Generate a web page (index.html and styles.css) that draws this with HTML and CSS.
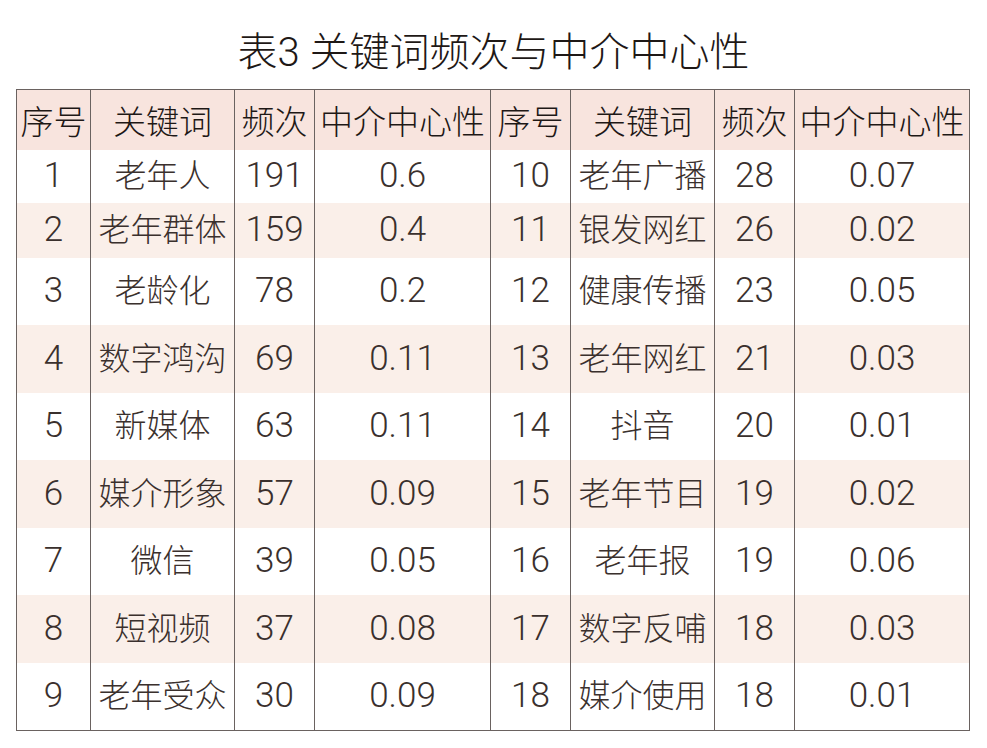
FILE: index.html
```html
<!DOCTYPE html>
<html lang="zh-CN">
<head>
<meta charset="utf-8">
<title>表3 关键词频次与中介中心性</title>
<link rel="stylesheet" href="styles.css">
</head>
<body>
<h1 class="title">表3 关键词频次与中介中心性</h1>
<table class="kw">
  <colgroup>
    <col class="c-no1"><col class="c-kw"><col class="c-fq"><col class="c-bc">
    <col class="c-no"><col class="c-kw"><col class="c-fq"><col class="c-bc2">
  </colgroup>
  <thead>
    <tr class="head">
      <th>序号</th><th>关键词</th><th>频次</th><th>中介中心性</th>
      <th>序号</th><th>关键词</th><th>频次</th><th>中介中心性</th>
    </tr>
  </thead>
  <tbody>
    <tr class="r1"><td>1</td><td>老年人</td><td>191</td><td>0.6</td><td>10</td><td>老年广播</td><td>28</td><td>0.07</td></tr>
    <tr class="r2 alt"><td>2</td><td>老年群体</td><td>159</td><td>0.4</td><td>11</td><td>银发网红</td><td>26</td><td>0.02</td></tr>
    <tr><td>3</td><td>老龄化</td><td>78</td><td>0.2</td><td>12</td><td>健康传播</td><td>23</td><td>0.05</td></tr>
    <tr class="alt"><td>4</td><td>数字鸿沟</td><td>69</td><td>0.11</td><td>13</td><td>老年网红</td><td>21</td><td>0.03</td></tr>
    <tr><td>5</td><td>新媒体</td><td>63</td><td>0.11</td><td>14</td><td>抖音</td><td>20</td><td>0.01</td></tr>
    <tr class="alt"><td>6</td><td>媒介形象</td><td>57</td><td>0.09</td><td>15</td><td>老年节目</td><td>19</td><td>0.02</td></tr>
    <tr><td>7</td><td>微信</td><td>39</td><td>0.05</td><td>16</td><td>老年报</td><td>19</td><td>0.06</td></tr>
    <tr class="alt"><td>8</td><td>短视频</td><td>37</td><td>0.08</td><td>17</td><td>数字反哺</td><td>18</td><td>0.03</td></tr>
    <tr><td>9</td><td>老年受众</td><td>30</td><td>0.09</td><td>18</td><td>媒介使用</td><td>18</td><td>0.01</td></tr>
  </tbody>
</table>
</body>
</html>
```

FILE: styles.css
```css
html, body {
  margin: 0;
  padding: 0;
  background: #ffffff;
}

body {
  width: 987px;
  height: 748px;
  overflow: hidden;
  color: #3a302d;
  font-family: Roboto, "Noto Sans CJK SC", sans-serif;
  font-weight: 300;
}

.title {
  margin: 0 0 11px 0;
  padding-top: 28px;
  font-size: 40px;
  line-height: 50px;
  font-weight: 300;
  text-align: center;
  color: #1e1816;
  letter-spacing: 0;
}

.kw {
  margin-left: 16px;
  width: 954px;
  table-layout: fixed;
  border-collapse: collapse;
  border: 1px solid #6a6260;
}

.c-no1 { width: 74px; }
.c-no { width: 80px; }
.c-kw { width: 144px; }
.c-fq { width: 80px; }
.c-bc { width: 176px; }
.c-bc2 { width: 175px; }

.kw th,
.kw td {
  padding: 0;
  text-align: center;
  vertical-align: middle;
  border-left: 1px solid #6a6260;
  border-right: 1px solid #6a6260;
  white-space: nowrap;
  overflow: visible;
}

.kw th {
  font-size: 33px;
  font-weight: 300;
  color: #1e1816;
}

.kw td {
  font-size: 32px;
  line-height: 40px;
}

/* numeric columns (序号, 频次, 中介中心性) use slightly larger figures */
.kw td:not(:nth-child(4n+2)) {
  font-size: 35px;
}

.head {
  height: 60px;
  background: #f8e4de;
}

.kw tbody tr {
  height: 67.5px;
  background: #ffffff;
}

.kw tbody tr.alt {
  background: #faefe9;
}

.kw tbody tr.r1 { height: 53px; }
.kw tbody tr.r2 { height: 55px; }
```
